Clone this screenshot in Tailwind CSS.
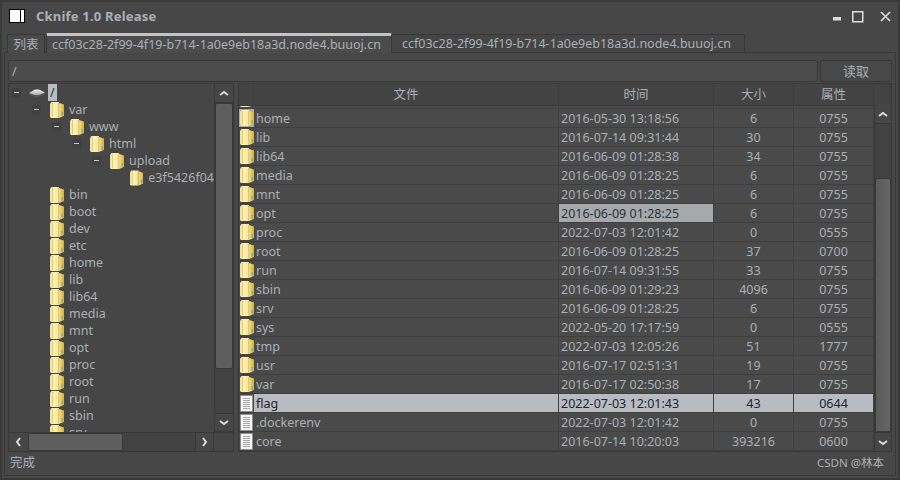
<!DOCTYPE html>
<html><head><meta charset="utf-8"><script src="https://cdn.jsdelivr.net/npm/@tailwindcss/browser@4"></script></head>
<body class="m-0 overflow-hidden bg-[#3a3a3a]">
<svg class="absolute w-0 h-0" width="0" height="0">
<defs>
<linearGradient id="fg" x1="0" x2="1" y1="0" y2="0"><stop offset="0" stop-color="#f3e08c"/><stop offset=".35" stop-color="#fff4b8"/><stop offset="1" stop-color="#f7e596"/></linearGradient>
<linearGradient id="fr" x1="0" x2="1" y1="0" y2="0"><stop offset="0" stop-color="#f4e08a"/><stop offset="1" stop-color="#cfae48"/></linearGradient>
<linearGradient id="dk" x1="0" x2="0" y1="0" y2="1"><stop offset="0" stop-color="#f2f2f2"/><stop offset="1" stop-color="#a8a8a8"/></linearGradient>
<symbol id="folder" viewBox="0 0 14 16"><path d="M0 2l1.500-2H9v16H1l-1-1z" fill="url(#fg)"/><path d="M9 1l5 1.500V14l-5 2z" fill="url(#fr)"/><path d="M2.500 1v14" stroke="#d3b75e" stroke-width=".7" fill="none"/><path d="M8.700 1v15" stroke="#c9a84a" stroke-width=".6" fill="none"/><path d="M11.500 10h1.200v3.500h-1.200z" fill="#58a6d8"/></symbol>
<symbol id="file" viewBox="0 0 13 17"><path d="M.5.5h12v16H.5z" fill="#f5f5f5" stroke="#8f8f8f"/><path d="M3 3.500h7M3 5.500h7M3 7.500h7M3 9.500h7M3 11.500h7M3 13.500h7" stroke="#a8a8a8" fill="none"/></symbol>
</defs></svg>
<div class="w-[900px] h-[480px] flex flex-col bg-[#474747] border-2 border-[#3a3a3a] text-[#a9b0b7] text-[12.500px] leading-[17px] font-['Noto_Sans','Noto_Sans_CJK_SC',sans-serif] overflow-hidden">
  <!-- title bar -->
  <div class="h-[30px] shrink-0 flex items-center pl-[7px] pr-[6px]">
    <div class="w-[16px] h-[14px] mb-[2px] bg-white border border-black flex justify-end"><div class="w-[1px] bg-black mr-[3px] border-l border-black"></div></div>
    <div class="ml-[11px] mb-[2px] font-bold text-[#a9b0b7] text-[13px] tracking-[0.2px]">Cknife 1.0 Release</div>
    <div class="ml-auto flex items-center">
      <svg class="mr-[8px]" width="12" height="12" viewBox="0 0 12 12"><rect x="1" y="6" width="8" height="3.500" fill="#ddd"/></svg>
      <svg class="mr-[16px]" width="12" height="12" viewBox="0 0 12 12"><rect x=".75" y=".75" width="10" height="10" fill="none" stroke="#ddd" stroke-width="1.500"/></svg>
      <svg width="12" height="12" viewBox="0 0 12 12"><path d="M1 1l9 9M10 1l-9 9" stroke="#ddd" stroke-width="1.700" fill="none"/></svg>
    </div>
  </div>
  <!-- tabs -->
  <div class="h-[21px] shrink-0 flex items-end pl-[5px] -mb-px z-10 whitespace-nowrap">
    <div class="h-[19px] w-[38px] mr-px flex items-center justify-center border border-[#383838] border-b-0 bg-[#4a4a4a]">列表</div>
    <div class="h-[20px] w-[346px] flex items-center pl-[5px] border-x border-[#383838] border-t-[3px] border-t-[#c4c4c4] bg-[#4b4b4b] rounded-t-[2px]">ccf03c28-2f99-4f19-b714-1a0e9eb18a3d.node4.buuoj.cn</div>
    <div class="h-[19px] w-[353px] flex items-center pl-[10px] border border-[#383838] border-l-0 bg-[#454545]">ccf03c28-2f99-4f19-b714-1a0e9eb18a3d.node4.buuoj.cn</div>
  </div>
  <!-- pane -->
  <div class="flex-1 min-h-0 mx-[2px] mb-[2px] border border-[#383838] flex flex-col px-[3px] pt-[7px]">
    <div class="h-[22px] shrink-0 flex gap-[2px]">
      <div class="w-[810px] border border-[#383838] rounded-[3px] bg-[#4b4b4b] pl-[3px] flex items-center">/</div>
      <div class="w-[72px] border border-[#383838] rounded-[2px] bg-[#484848] flex items-center justify-center text-[13px]">读取</div>
    </div>
    <div class="h-[369px] mt-px shrink-0 flex gap-[4px]">
      <!-- tree -->
      <div class="w-[226px] border border-[#383838] flex flex-col">
        <div class="flex-1 min-h-0 flex">
          <div class="flex-1 overflow-hidden bg-[#464646] flex flex-col [&>div]:h-[17px] [&>div]:shrink-0 [&>div]:flex [&>div]:items-center [&>div]:whitespace-nowrap">
            <div class="pl-[3px]"><span class="w-[9px] h-[9px] rounded-[2px] bg-[#404040] flex items-center justify-center"><span class="w-[5px] h-px bg-[#c8c8c8]"></span></span><svg class="ml-[8px]" width="16" height="10" viewBox="0 0 16 10"><path d="M0 5l6-3h4l6 2.500V6l-6 3H6L0 6.500z" fill="#5a5a5a"/><path d="M0 5l6-3.500h4l6 3-6 2.500H6z" fill="url(#dk)"/></svg><span class="ml-[3px] h-[17px] w-[9px] bg-[#b9bdc2] text-[#2c3440] pl-[2px]">/</span></div>
            <div class="pl-[23px]"><span class="w-[9px] h-[9px] rounded-[2px] bg-[#404040] flex items-center justify-center"><span class="w-[5px] h-px bg-[#c8c8c8]"></span></span><svg class="ml-[9px]" width="14" height="16"><use href="#folder"/></svg><span class="ml-[5px]">var</span></div>
            <div class="pl-[43px]"><span class="w-[9px] h-[9px] rounded-[2px] bg-[#404040] flex items-center justify-center"><span class="w-[5px] h-px bg-[#c8c8c8]"></span></span><svg class="ml-[9px]" width="14" height="16"><use href="#folder"/></svg><span class="ml-[5px]">www</span></div>
            <div class="pl-[63px]"><span class="w-[9px] h-[9px] rounded-[2px] bg-[#404040] flex items-center justify-center"><span class="w-[5px] h-px bg-[#c8c8c8]"></span></span><svg class="ml-[9px]" width="14" height="16"><use href="#folder"/></svg><span class="ml-[5px]">html</span></div>
            <div class="pl-[83px]"><span class="w-[9px] h-[9px] rounded-[2px] bg-[#404040] flex items-center justify-center"><span class="w-[5px] h-px bg-[#c8c8c8]"></span></span><svg class="ml-[9px]" width="14" height="16"><use href="#folder"/></svg><span class="ml-[5px]">upload</span></div>
            <div class="pl-[121px]"><svg width="14" height="16"><use href="#folder"/></svg><span class="ml-[5px]">e3f5426f04</span></div>
            <div class="pl-[41px]"><svg width="14" height="16"><use href="#folder"/></svg><span class="ml-[5px]">bin</span></div>
            <div class="pl-[41px]"><svg width="14" height="16"><use href="#folder"/></svg><span class="ml-[5px]">boot</span></div>
            <div class="pl-[41px]"><svg width="14" height="16"><use href="#folder"/></svg><span class="ml-[5px]">dev</span></div>
            <div class="pl-[41px]"><svg width="14" height="16"><use href="#folder"/></svg><span class="ml-[5px]">etc</span></div>
            <div class="pl-[41px]"><svg width="14" height="16"><use href="#folder"/></svg><span class="ml-[5px]">home</span></div>
            <div class="pl-[41px]"><svg width="14" height="16"><use href="#folder"/></svg><span class="ml-[5px]">lib</span></div>
            <div class="pl-[41px]"><svg width="14" height="16"><use href="#folder"/></svg><span class="ml-[5px]">lib64</span></div>
            <div class="pl-[41px]"><svg width="14" height="16"><use href="#folder"/></svg><span class="ml-[5px]">media</span></div>
            <div class="pl-[41px]"><svg width="14" height="16"><use href="#folder"/></svg><span class="ml-[5px]">mnt</span></div>
            <div class="pl-[41px]"><svg width="14" height="16"><use href="#folder"/></svg><span class="ml-[5px]">opt</span></div>
            <div class="pl-[41px]"><svg width="14" height="16"><use href="#folder"/></svg><span class="ml-[5px]">proc</span></div>
            <div class="pl-[41px]"><svg width="14" height="16"><use href="#folder"/></svg><span class="ml-[5px]">root</span></div>
            <div class="pl-[41px]"><svg width="14" height="16"><use href="#folder"/></svg><span class="ml-[5px]">run</span></div>
            <div class="pl-[41px]"><svg width="14" height="16"><use href="#folder"/></svg><span class="ml-[5px]">sbin</span></div>
            <div class="pl-[41px]"><svg width="14" height="16"><use href="#folder"/></svg><span class="ml-[5px]">srv</span></div>
          </div>
          <!-- tree vbar -->
          <div class="w-[19px] shrink-0 border-l border-[#383838] flex flex-col bg-[#424242]">
            <div class="h-[19px] bg-[#464646] border-b border-[#383838] flex items-center justify-center"><svg width="10" height="7" viewBox="0 0 10 7"><path d="M1 5l4-3 4 3" fill="none" stroke="#ddd" stroke-width="2"/></svg></div>
            <div class="h-[266px] bg-[#5e5e5e] border border-[#383838] rounded-[2px]"></div>
            <div class="mt-auto h-[19px] bg-[#464646] border-y border-[#383838] flex items-center justify-center"><svg width="10" height="7" viewBox="0 0 10 7"><path d="M1 2l4 3 4-3" fill="none" stroke="#ddd" stroke-width="2"/></svg></div>
          </div>
        </div>
        <!-- tree hbar -->
        <div class="h-[19px] shrink-0 border-t border-[#383838] flex bg-[#424242]">
          <div class="w-[19px] bg-[#464646] flex items-center justify-center"><svg width="7" height="10" viewBox="0 0 7 10"><path d="M5 1L2 5l3 4" fill="none" stroke="#ddd" stroke-width="2"/></svg></div>
          <div class="w-[95px] bg-[#5e5e5e] border border-[#383838] rounded-[2px]"></div>
          <div class="ml-auto w-[19px] bg-[#464646] border-x border-[#383838] flex items-center justify-center"><svg width="7" height="10" viewBox="0 0 7 10"><path d="M2 1l3 4-3 4" fill="none" stroke="#ddd" stroke-width="2"/></svg></div>
          <div class="w-[19px] bg-[#474747]"></div>
        </div>
      </div>
      <!-- table -->
      <div class="w-[654px] border border-[#383838] flex flex-col">
        <div class="h-[22px] shrink-0 grid grid-cols-[15px_305px_155px_80px_80px_1fr] bg-[#434343] border-b border-[#383838] [&>div]:flex [&>div]:items-center [&>div]:justify-center [&>div]:border-r [&>div]:border-[#3e3e3e]">
          <div></div><div>文件</div><div>时间</div><div>大小</div><div>属性</div><div class="border-r-0"></div>
        </div>
        <div class="flex-1 min-h-0 flex">
          <div class="w-[635px] overflow-hidden bg-[#4a4a4a]">
            <div class="mt-[-16px] grid grid-cols-[15px_305px_155px_80px_80px] auto-rows-[19px] [&>div]:flex [&>div]:items-center [&>div]:border-b [&>div]:border-r [&>div]:border-[#3f3f3f] [&>div:nth-child(5n+3)]:pl-[2px] [&>div:nth-child(5n+4)]:justify-center [&>div:nth-child(5n)]:justify-center [&>div:nth-child(5n+1)]:border-r-0 [&>div:nth-child(5n+1)]:justify-center [&>div:nth-child(5n+2)]:pl-[2px]">
              <div class="bg-[#474747]"><svg width="14" height="16"><use href="#folder"/></svg></div><div></div><div></div><div></div><div></div>
              <div class="bg-[#a8acb0]"><svg width="14" height="16"><use href="#folder"/></svg></div><div>home</div><div>2016-05-30 13:18:56</div><div>6</div><div>0755</div>
              <div class="bg-[#474747]"><svg width="14" height="16"><use href="#folder"/></svg></div><div>lib</div><div>2016-07-14 09:31:44</div><div>30</div><div>0755</div>
              <div class="bg-[#474747]"><svg width="14" height="16"><use href="#folder"/></svg></div><div>lib64</div><div>2016-06-09 01:28:38</div><div>34</div><div>0755</div>
              <div class="bg-[#474747]"><svg width="14" height="16"><use href="#folder"/></svg></div><div>media</div><div>2016-06-09 01:28:25</div><div>6</div><div>0755</div>
              <div class="bg-[#474747]"><svg width="14" height="16"><use href="#folder"/></svg></div><div>mnt</div><div>2016-06-09 01:28:25</div><div>6</div><div>0755</div>
              <div class="bg-[#474747]"><svg width="14" height="16"><use href="#folder"/></svg></div><div>opt</div><div class="bg-[#a6a9ac] text-[#2b323b]">2016-06-09 01:28:25</div><div>6</div><div>0755</div>
              <div class="bg-[#474747]"><svg width="14" height="16"><use href="#folder"/></svg></div><div>proc</div><div>2022-07-03 12:01:42</div><div>0</div><div>0555</div>
              <div class="bg-[#474747]"><svg width="14" height="16"><use href="#folder"/></svg></div><div>root</div><div>2016-06-09 01:28:25</div><div>37</div><div>0700</div>
              <div class="bg-[#474747]"><svg width="14" height="16"><use href="#folder"/></svg></div><div>run</div><div>2016-07-14 09:31:55</div><div>33</div><div>0755</div>
              <div class="bg-[#474747]"><svg width="14" height="16"><use href="#folder"/></svg></div><div>sbin</div><div>2016-06-09 01:29:23</div><div>4096</div><div>0755</div>
              <div class="bg-[#474747]"><svg width="14" height="16"><use href="#folder"/></svg></div><div>srv</div><div>2016-06-09 01:28:25</div><div>6</div><div>0755</div>
              <div class="bg-[#474747]"><svg width="14" height="16"><use href="#folder"/></svg></div><div>sys</div><div>2022-05-20 17:17:59</div><div>0</div><div>0555</div>
              <div class="bg-[#474747]"><svg width="14" height="16"><use href="#folder"/></svg></div><div>tmp</div><div>2022-07-03 12:05:26</div><div>51</div><div>1777</div>
              <div class="bg-[#474747]"><svg width="14" height="16"><use href="#folder"/></svg></div><div>usr</div><div>2016-07-17 02:51:31</div><div>19</div><div>0755</div>
              <div class="bg-[#474747]"><svg width="14" height="16"><use href="#folder"/></svg></div><div>var</div><div>2016-07-17 02:50:38</div><div>17</div><div>0755</div>
              <div class="bg-[#474747]"><svg width="13" height="17"><use href="#file"/></svg></div><div class="bg-[#b8bcc0] text-[#20262e]">flag</div><div class="bg-[#b8bcc0] text-[#20262e]">2022-07-03 12:01:43</div><div class="bg-[#b8bcc0] text-[#20262e]">43</div><div class="bg-[#b8bcc0] text-[#20262e]">0644</div>
              <div class="bg-[#474747]"><svg width="13" height="17"><use href="#file"/></svg></div><div>.dockerenv</div><div>2022-07-03 12:01:42</div><div>0</div><div>0755</div>
              <div class="bg-[#474747]"><svg width="13" height="17"><use href="#file"/></svg></div><div>core</div><div>2016-07-14 10:20:03</div><div>393216</div><div>0600</div>
            </div>
          </div>
          <div class="w-[17px] shrink-0 border-l border-[#383838] flex flex-col bg-[#424242] -mt-px z-10">
            <div class="h-[19px] bg-[#464646] border-b border-[#383838] flex items-center justify-center"><svg width="10" height="7" viewBox="0 0 10 7"><path d="M1 5l4-3 4 3" fill="none" stroke="#ddd" stroke-width="2"/></svg></div>
            <div class="mt-[54px] h-[254px] bg-linear-to-r from-[#5a5a5a] to-[#666666] border border-[#383838] rounded-[2px]"></div>
            <div class="mt-auto h-[19px] bg-[#464646] border-t border-[#383838] flex items-center justify-center"><svg width="10" height="7" viewBox="0 0 10 7"><path d="M1 2l4 3 4-3" fill="none" stroke="#ddd" stroke-width="2"/></svg></div>
          </div>
        </div>
      </div>
    </div>
    <div class="h-[18px] flex items-center justify-between pl-[2px] pr-[8px] mt-px"><span>完成</span><span class="text-[11.500px] text-[#b0b0b0]">CSDN @林本</span></div>
  </div>
</div>
</body></html>
